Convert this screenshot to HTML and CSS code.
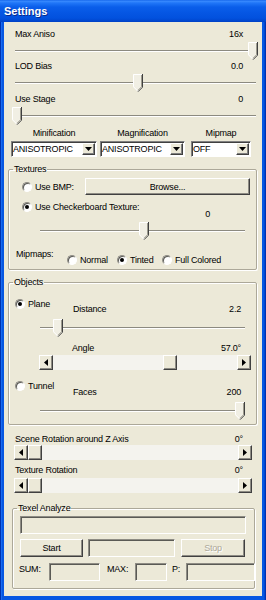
FILE: index.html
```html
<!DOCTYPE html>
<html>
<head>
<meta charset="utf-8">
<title>Settings</title>
<link rel="stylesheet" href="styles.css">
</head>
<body>
<div class="window">
  <div class="titlebar">Settings</div>
  <div class="client">
    <div class="row r1"><span>Max Aniso</span><span>16x</span></div>
    <div class="slider main"><div class="track"></div><svg class="thumb" style="left:236px" width="10" height="18" viewBox="0 0 10 18"><path d="M0 0H10V13L5 18L0 13Z" fill="#F1EFE4"/><path d="M5 17.3L0.5 12.8V0.5H9" fill="none" stroke="#fff"/><path d="M9.5 0V13.2L5 17.7" fill="none" stroke="#404040"/><path d="M8.5 1V12.8L5 16.3" fill="none" stroke="#9D9B8E"/></svg></div>
    <div class="row"><span>LOD Bias</span><span>0.0</span></div>
    <div class="slider main"><div class="track"></div><svg class="thumb" style="left:121px" width="10" height="18" viewBox="0 0 10 18"><path d="M0 0H10V13L5 18L0 13Z" fill="#F1EFE4"/><path d="M5 17.3L0.5 12.8V0.5H9" fill="none" stroke="#fff"/><path d="M9.5 0V13.2L5 17.7" fill="none" stroke="#404040"/><path d="M8.5 1V12.8L5 16.3" fill="none" stroke="#9D9B8E"/></svg></div>
    <div class="row r3"><span>Use Stage</span><span>0</span></div>
    <div class="slider main"><div class="track"></div><svg class="thumb" style="left:0px" width="10" height="18" viewBox="0 0 10 18"><path d="M0 0H10V13L5 18L0 13Z" fill="#F1EFE4"/><path d="M5 17.3L0.5 12.8V0.5H9" fill="none" stroke="#fff"/><path d="M9.5 0V13.2L5 17.7" fill="none" stroke="#404040"/><path d="M8.5 1V12.8L5 16.3" fill="none" stroke="#9D9B8E"/></svg></div>

    <div class="combos">
      <div class="col c1">
        <div class="head">Minification</div>
        <div class="combo"><span class="ctext">ANISOTROPIC</span><i class="dd"><svg width="7" height="4" viewBox="0 0 7 4"><path d="M0 0H7L3.5 4Z" fill="#000"/></svg></i></div>
      </div>
      <div class="col c2">
        <div class="head">Magnification</div>
        <div class="combo"><span class="ctext">ANISOTROPIC</span><i class="dd"><svg width="7" height="4" viewBox="0 0 7 4"><path d="M0 0H7L3.5 4Z" fill="#000"/></svg></i></div>
      </div>
      <div class="col c3">
        <div class="head">Mipmap</div>
        <div class="combo"><span class="ctext">OFF</span><i class="dd"><svg width="7" height="4" viewBox="0 0 7 4"><path d="M0 0H7L3.5 4Z" fill="#000"/></svg></i></div>
      </div>
    </div>

    <fieldset class="group tex">
      <legend>Textures</legend>
      <div class="gb">
        <div class="bmp">
          <label class="opt"><i class="radio"></i>Use BMP:</label>
          <div class="btn browse">Browse...</div>
        </div>
        <div class="checker">
          <label class="opt"><i class="radio on"></i>Use Checkerboard Texture:</label>
          <span class="cval">0</span>
        </div>
        <div class="slider tslider"><div class="track"></div><svg class="thumb" style="left:102px" width="10" height="18" viewBox="0 0 10 18"><path d="M0 0H10V13L5 18L0 13Z" fill="#F1EFE4"/><path d="M5 17.3L0.5 12.8V0.5H9" fill="none" stroke="#fff"/><path d="M9.5 0V13.2L5 17.7" fill="none" stroke="#404040"/><path d="M8.5 1V12.8L5 16.3" fill="none" stroke="#9D9B8E"/></svg></div>
        <div class="mips">
          <span class="mlabel">Mipmaps:</span>
          <div class="mopts">
            <label class="opt w-normal"><i class="radio"></i>Normal</label>
            <label class="opt w-tinted"><i class="radio on"></i>Tinted</label>
            <label class="opt"><i class="radio"></i>Full Colored</label>
          </div>
        </div>
      </div>
    </fieldset>

    <fieldset class="group obj">
      <legend>Objects</legend>
      <div class="gb">
        <div class="ohead">
          <label class="opt ow"><i class="radio on"></i>Plane</label>
          <div class="kv"><span>Distance</span><span>2.2</span></div>
        </div>
        <div class="slider oslider"><div class="track"></div><svg class="thumb" style="left:16px" width="10" height="18" viewBox="0 0 10 18"><path d="M0 0H10V13L5 18L0 13Z" fill="#F1EFE4"/><path d="M5 17.3L0.5 12.8V0.5H9" fill="none" stroke="#fff"/><path d="M9.5 0V13.2L5 17.7" fill="none" stroke="#404040"/><path d="M8.5 1V12.8L5 16.3" fill="none" stroke="#9D9B8E"/></svg></div>
        <div class="kv angle"><span>Angle</span><span>57.0°</span></div>
        <div class="scroll s-angle">
          <i class="sbtn"><svg width="4" height="7" viewBox="0 0 4 7"><path d="M4 0V7L0 3.5Z" fill="#000"/></svg></i>
          <i class="sthumb" style="margin-left:110px"></i>
          <i class="sfill"></i>
          <i class="sbtn"><svg width="4" height="7" viewBox="0 0 4 7"><path d="M0 0V7L4 3.5Z" fill="#000"/></svg></i>
        </div>
        <div class="ohead tunnel">
          <label class="opt ow"><i class="radio"></i>Tunnel</label>
          <div class="kv"><span>Faces</span><span>200</span></div>
        </div>
        <div class="slider oslider"><div class="track"></div><svg class="thumb" style="left:198px" width="10" height="18" viewBox="0 0 10 18"><path d="M0 0H10V13L5 18L0 13Z" fill="#F1EFE4"/><path d="M5 17.3L0.5 12.8V0.5H9" fill="none" stroke="#fff"/><path d="M9.5 0V13.2L5 17.7" fill="none" stroke="#404040"/><path d="M8.5 1V12.8L5 16.3" fill="none" stroke="#9D9B8E"/></svg></div>
      </div>
    </fieldset>

    <div class="row r-scene"><span>Scene Rotation around Z Axis</span><span>0°</span></div>
    <div class="scroll s-main">
      <i class="sbtn"><svg width="4" height="7" viewBox="0 0 4 7"><path d="M4 0V7L0 3.5Z" fill="#000"/></svg></i>
      <i class="sthumb" style="margin-left:0px"></i>
      <i class="sfill"></i>
      <i class="sbtn"><svg width="4" height="7" viewBox="0 0 4 7"><path d="M0 0V7L4 3.5Z" fill="#000"/></svg></i>
    </div>
    <div class="row r-tex"><span>Texture Rotation</span><span>0°</span></div>
    <div class="scroll s-main s-tex">
      <i class="sbtn"><svg width="4" height="7" viewBox="0 0 4 7"><path d="M4 0V7L0 3.5Z" fill="#000"/></svg></i>
      <i class="sthumb" style="margin-left:0px"></i>
      <i class="sfill"></i>
      <i class="sbtn"><svg width="4" height="7" viewBox="0 0 4 7"><path d="M0 0V7L4 3.5Z" fill="#000"/></svg></i>
    </div>

    <fieldset class="group texel">
      <legend>Texel Analyze</legend>
      <div class="gb">
        <div class="edit wide"></div>
        <div class="btnrow">
          <div class="btn start">Start</div>
          <div class="edit mid"></div>
          <div class="btn stop disabled">Stop</div>
        </div>
        <div class="sumrow">
          <span class="slabel l-sum">SUM:</span>
          <div class="edit e-sum"></div>
          <span class="slabel l-max">MAX:</span>
          <div class="edit e-max"></div>
          <span class="slabel l-p">P:</span>
          <div class="edit e-p"></div>
        </div>
      </div>
    </fieldset>
  </div>
</div>
</body>
</html>
```

FILE: styles.css
```css
* { box-sizing: border-box; }
html, body { margin: 0; padding: 0; }
body {
  width: 266px;
  height: 600px;
  overflow: hidden;
  background: #ECE9D8;
  font-family: "Liberation Sans", Arial, sans-serif;
  font-size: 9px;
  letter-spacing: -0.2px;
  color: #000;
}
i { font-style: normal; }

.window {
  width: 266px;
  height: 600px;
  display: flex;
  flex-direction: column;
  background: linear-gradient(to right, #0032B0 0, #0032B0 1px, #1A6CF0 1px, #1A6CF0 2px, #0757E2 2px, #0757E2 264px, #0048D4 264px, #0048D4 265px, #0032B0 265px);
}
.titlebar {
  flex: none;
  height: 22px;
  padding: 1px 0 0 4px;
  line-height: 21px;
  color: #fff;
  font-family: "Liberation Sans", Arial, sans-serif;
  font-weight: bold;
  font-size: 11px;
  letter-spacing: 0;
  text-shadow: 1px 1px 0 #0A2A8C;
  background: linear-gradient(to bottom, #0A5CE6 0, #3B8CFF 1px, #2076F8 3px, #0A5EEA 7px, #0556E3 13px, #0251DE 18px, #0046CE 21px, #0040C4 22px);
}
.client {
  flex: 1;
  margin: 0 4px 4px;
  background: #ECE9D8;
  display: flex;
  flex-direction: column;
}

/* label / value rows */
.row {
  flex: none;
  display: flex;
  justify-content: space-between;
  height: 12px;
  line-height: 12px;
  padding: 0 19px 0 11px;
  white-space: nowrap;
}
.r1 { margin-top: 6px; }
.r3 { margin-top: 1px; }
.r-scene { margin-top: 8px; }
.r-tex { margin-top: 4px; }

/* trackbar */
.slider {
  display: flow-root;
  position: relative;
  height: 18px;
  flex: none;
}
.track {
  height: 2px;
  margin: 8px 2px 0 3px;
  border-top: 1px solid #8C8A80;
  border-bottom: 1px solid #FFFFFF;
}
.thumb { position: absolute; top: 0; display: block; }
.slider.main { margin: 2px 4px 0 8px; }
.slider.tslider { margin: 2px 3px 0 15px; }
.slider.oslider { margin: 4px 3px 0 22px; }

/* combos */
.combos {
  flex: none;
  display: flex;
  margin: 2px 0 0 7px;
}
.col { display: flex; flex-direction: column; }
.c1 { width: 86px; }
.c2 { width: 85px; margin-left: 3px; }
.c3 { width: 60px; margin-left: 6px; }
.head { height: 12px; line-height: 12px; text-align: center; white-space: nowrap; }
.combo {
  margin-top: 2px;
  height: 16px;
  background: #fff;
  border: 1px solid;
  border-color: #808080 #FFFFFF #FFFFFF #808080;
  box-shadow: inset 1px 1px 0 #404040;
  display: flex;
  align-items: center;
  padding: 0 1px 0 1px;
}
.ctext { flex: 1; line-height: 12px; white-space: nowrap; }
.dd {
  flex: none;
  width: 13px;
  height: 12px;
  background: #ECE9D8;
  border: 1px solid;
  border-color: #FFFFFF #404040 #404040 #FFFFFF;
  box-shadow: inset -1px -1px 0 #808080;
  display: flex;
  align-items: center;
  justify-content: center;
}
.dd svg { display: block; }

/* group boxes */
fieldset.group {
  flex: none;
  min-width: 0;
  padding: 0;
  border: 1px solid #ACA899;
  border-radius: 2px;
  box-shadow: 1px 1px 0 #FFFFFF, inset 1px 1px 0 #FFFFFF;
}
legend {
  margin-left: 4px;
  padding: 0 1px;
  height: 12px;
  line-height: 12px;
  white-space: nowrap;
}
.gb { display: flow-root; }
.tex { margin: 6px 5px 0 4px; }
.tex .gb { padding: 0 6px 3px 13px; }
.obj { margin: 6px 5px 0 4px; }
.obj .gb { padding: 0 6px 4px 6px; }
.texel { margin: 9px 7px 0 8px; }
.texel .gb { padding: 0 8px 7px 7px; }

/* radio options */
.opt {
  display: flex;
  align-items: center;
  gap: 3px;
  height: 12px;
  line-height: 12px;
  white-space: nowrap;
}
.radio {
  position: relative;
  flex: none;
  width: 10px;
  height: 10px;
  border-radius: 50%;
  background: #fff;
  border: 1px solid;
  border-color: #8E8C84 #FFFFFF #FFFFFF #8E8C84;
  box-shadow: inset 1px 1px 0 #5A5A55;
}
.radio.on::after {
  content: "";
  position: absolute;
  left: 2px;
  top: 2px;
  width: 4px;
  height: 4px;
  border-radius: 50%;
  background: #000;
}

/* buttons and edits */
.btn {
  height: 100%;
  background: #ECE9D8;
  border: 1px solid;
  border-color: #FFFFFF #404040 #404040 #FFFFFF;
  box-shadow: inset -1px -1px 0 #8E8C84;
  display: flex;
  align-items: center;
  justify-content: center;
  white-space: nowrap;
}
.btn.disabled { color: #ACA899; text-shadow: 1px 1px 0 #fff; }
.edit {
  height: 18px;
  background: #ECE9D8;
  border: 1px solid;
  border-color: #8E8C84 #FFFFFF #FFFFFF #8E8C84;
  box-shadow: inset 1px 1px 0 #5A5A55;
}

/* textures group contents */
.bmp {
  display: flex;
  align-items: center;
  height: 17px;
  margin-top: 3px;
}
.browse { margin-left: auto; width: 165px; height: 17px; }
.checker {
  display: flex;
  align-items: flex-start;
  height: 19px;
  margin-top: 6px;
}
.cval {
  margin-left: auto;
  margin-right: 40px;
  margin-top: 7px;
  line-height: 12px;
}
.mips {
  display: flex;
  align-items: flex-start;
  margin: 8px 0 0 -6px;
  height: 18px;
}
.mlabel { width: 51px; line-height: 12px; white-space: nowrap; }
.mopts { display: flex; margin-top: 6px; }
.w-normal { width: 50px; }
.w-tinted { width: 45px; }

/* objects group contents */
.ohead {
  display: flex;
  align-items: flex-start;
  height: 17px;
  margin-top: 10px;
}
.ohead.tunnel { margin-top: 10px; height: 18px; }
.ohead.tunnel .kv { margin-top: 6px; }
.ow { width: 58px; flex: none; }
.kv {
  display: flex;
  justify-content: space-between;
  height: 12px;
  line-height: 12px;
  white-space: nowrap;
}
.ohead .kv { flex: 1; margin-top: 5px; padding-right: 9px; }
.kv.angle { margin: 5px 9px 0 57px; }

/* scrollbars */
.scroll {
  flex: none;
  display: flex;
  height: 15px;
  background: #F4F3EE;
}
.s-angle { margin: 1px -1px 0 24px; }
.s-main { margin: 0 10px 0 10px; }
.s-main.s-tex { margin-top: 2px; }
.sbtn, .sthumb {
  flex: none;
  width: 14px;
  height: 15px;
  background: #ECE9D8;
  border: 1px solid;
  border-color: #FFFFFF #404040 #404040 #FFFFFF;
  box-shadow: inset -1px -1px 0 #8E8C84;
  display: flex;
  align-items: center;
  justify-content: center;
}
.sbtn svg { display: block; }
.sfill { flex: 1; }

/* texel group */
.edit.wide { margin-top: 2px; }
.btnrow {
  display: flex;
  height: 18px;
  margin-top: 5px;
}
.start { width: 63px; }
.edit.mid { width: 87px; margin-left: 5px; }
.stop { width: 64px; margin-left: 6px; }
.sumrow {
  display: flex;
  align-items: flex-start;
  height: 18px;
  margin-top: 6px;
}
.slabel { line-height: 12px; white-space: nowrap; flex: none; }
.l-sum { width: 30px; margin-left: -1px; }
.e-sum { width: 51px; flex: none; }
.l-max { width: 28px; margin-left: 7px; }
.e-max { width: 32px; flex: none; }
.l-p { width: 14px; margin-left: 5px; }
.e-p { width: 69px; flex: none; }
```
